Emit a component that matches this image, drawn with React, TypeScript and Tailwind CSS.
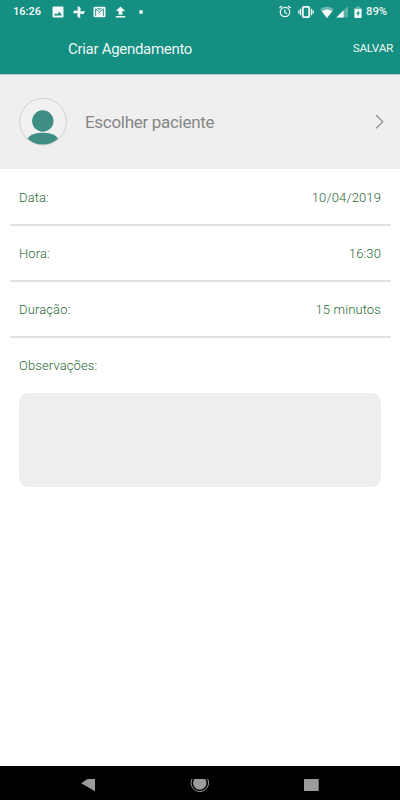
import React from 'react'

interface Campo {
  label: string
  valor: string
}

const campos: Campo[] = [
  { label: 'Data:', valor: '10/04/2019' },
  { label: 'Hora:', valor: '16:30' },
  { label: 'Duração:', valor: '15 minutos' },
]

/* ------------------------- BARRA DE STATUS ------------------------- */
const BarraStatus = () => (
  <div className="flex h-6 items-center text-[11px] font-medium text-white/95">
    <span className="ml-[13px] w-[39px] text-[11px] font-semibold">16:26</span>
    <svg className="h-[13px] w-[12px]" viewBox="0 0 12 13" fill="currentColor">
      <path fillRule="evenodd" d="M1.500.5h9a1 1 0 0 1 1 1v9a1 1 0 0 1-1 1h-9a1 1 0 0 1-1-1v-9a1 1 0 0 1 1-1zM2 9.500h8L7.300 5.800 5.200 8.400 3.800 6.900z" />
    </svg>
    <svg className="ml-[9px] h-[13px] w-[12px]" viewBox="0 0 12 13" fill="currentColor">
      <path d="M4.700 5.300V.3Q8 .7 7.700 3.900L6.900 5.200h5Q11.500 8.400 8.300 8.100L7.200 7.300v4.900Q3.900 11.800 4.200 8.600L5 7.300H.1Q.5 4.100 3.700 4.400z" />
    </svg>
    <svg className="ml-[8px] h-[13px] w-[13px]" viewBox="0 0 13 13">
      <rect x="0.500" y="0.700" width="12" height="10.500" rx="1.200" fill="currentColor" />
      <path d="M2.600 9.900V3l3.900 3.100L10.400 3v6.900" fill="none" stroke="#148f82" strokeWidth="0.900" />
      <path d="M3.300 1.900h6.400L6.500 4.300z" fill="#148f82" fillOpacity="0.600" />
    </svg>
    <svg className="ml-[9px] h-[13px] w-[11px]" viewBox="0 0 11 13" fill="currentColor">
      <path d="M5.500.5.900 5h2.700v3.800h3.800V5h2.700zM.8 9.900h9.400v1.600H.8z" />
    </svg>
    <span className="mb-px ml-[13px] h-1 w-1 rounded-full bg-white/95" />
    <svg className="ml-auto h-[14px] w-[13px]" viewBox="0 0 13 14" fill="none" stroke="currentColor">
      <circle cx="6" cy="7" r="4.700" strokeWidth="1.300" />
      <path d="M.4 3.100 3.100.9M11.600 3.100 8.900.9" strokeWidth="1.300" />
      <path d="M5.800 4.300v3.100l2.300 1.400" strokeWidth="1.100" />
    </svg>
    <svg className="ml-[6px] h-[13px] w-[16px]" viewBox="0 0 16 13" fill="none" stroke="currentColor">
      <rect x="4.900" y="0.900" width="6.200" height="10.200" rx="0.800" strokeWidth="1.700" />
      <path d="M2.600 2.800v6.400M13.400 2.800v6.400M.9 4.200v3.600M15.100 4.200v3.600" strokeWidth="1.300" />
    </svg>
    <svg className="ml-[6px] h-[13px] w-[14px]" viewBox="0 0 14 13" fill="currentColor">
      <path opacity="0.400" d="M7 11.900.1 3.200Q7-1.500 13.900 3.200z" />
      <path d="M7 11.900 1.700 5.200Q7 2 12.300 5.200z" />
    </svg>
    <svg className="ml-[2px] h-[12px] w-[12px]" viewBox="0 0 12 12" fill="currentColor">
      <path opacity="0.300" d="M12 0v11.500H.3z" />
      <path d="M7.600 4.300v7.200H.3z" />
    </svg>
    <svg className="ml-[6px] h-[13px] w-[8px]" viewBox="0 0 8 13" fill="currentColor">
      <path opacity="0.400" d="M2.500.5h3v1.200h1.200q.9 0 .9.900V4H.4V2.600q0-.9.900-.9h1.200z" />
      <path fillRule="evenodd" d="M.4 3.300h7.200v7.900q0 .9-.9.900H1.300q-.9 0-.9-.9zM4.500 4.300 2.300 7.900h1.300v2.700l2.300-4H4.500z" />
    </svg>
    <span className="ml-[4px] w-[34px] text-[11.300px]">89%</span>
  </div>
)

/* --------------------------- CABEÇALHO --------------------------- */
const Cabecalho = () => (
  <header className="relative z-10 h-[74px] shrink-0 bg-[#148f82] text-white shadow-[0_1px_1px_rgba(0,0,0,0.15)]">
    <BarraStatus />
    <div className="flex h-[50px] items-center justify-between pr-[7px] pl-[68px]">
      <h1 className="text-[15px] tracking-[-0.300px] text-white/95">Criar Agendamento</h1>
      <button className="text-[11.800px] tracking-[-0.300px] text-white/95">SALVAR</button>
    </div>
  </header>
)

const Avatar = () => (
  <svg className="h-12 w-12" viewBox="0 0 48 48">
    <circle cx="24" cy="23.700" r="23.300" fill="#f1f1f1" stroke="#c6c6c6" strokeWidth="0.800" />
    <circle cx="23.800" cy="23" r="10.700" fill="#3f8e84" />
    <path d="M8.500 40.500Q12 34.700 23.800 34.700t15.300 5.800Q33 46.500 23.800 46.500T8.500 40.500z" fill="#3f8e84" />
  </svg>
)

/* ----------------------- NAVEGAÇÃO ANDROID ----------------------- */
const BarraNavegacao = () => (
  <nav className="flex h-[34px] items-center bg-black pt-1 pl-[81px] text-[#9b9b9b]">
    <svg className="h-[14px] w-[14px]" viewBox="0 0 14 14" fill="currentColor">
      <path d="M14 1v12.300L.2 5.300 6.500 1z" />
    </svg>
    <svg className="ml-[95px] h-[14px] w-[20px]" viewBox="0 0 20 14">
      <path d="M4.400 1h10.800A6.700 6.700 0 1 1 4.400 1z" fill="currentColor" />
      <path d="M2 1A8.700 8.700 0 1 0 17.600 1" fill="none" stroke="currentColor" />
    </svg>
    <svg className="ml-[94px] h-[14px] w-[15px]" viewBox="0 0 15 14" fill="currentColor">
      <rect x="0" y="1" width="14.700" height="12" rx="0.500" />
    </svg>
  </nav>
)

export default function App() {
  return (
    <main className="flex h-[800px] w-[400px] flex-col overflow-hidden bg-white font-['Roboto',sans-serif]">
      <Cabecalho />

      {/* Paciente */}
      <button className="flex h-[95px] shrink-0 items-center bg-[#efefef] pr-4 pl-[18.500px] text-left">
        <Avatar />
        <span className="ml-[18.500px] pt-[3px] text-[17px] tracking-[-0.300px] text-[#868686]">
          Escolher paciente
        </span>
        <svg className="ml-auto h-4 w-[9px]" viewBox="0 0 9 16" fill="none" stroke="#8c8c8c" strokeWidth="1.200">
          <path d="M1 1 7.800 7.700 1 14.400" />
        </svg>
      </button>

      {/* Dados do agendamento */}
      <ul className="px-[9.500px] pt-px text-[13px] font-light tracking-[0.120px] text-[#1f6a35]">
        {campos.map(c => (
          <li
            key={c.label}
            className="flex h-14 items-center justify-between border-b-2 border-[#e2e2e2] px-[9.500px] pt-px"
          >
            <span>{c.label}</span>
            <span>{c.valor}</span>
          </li>
        ))}
      </ul>

      <section className="flex flex-1 flex-col px-[19px]">
        <label className="flex h-[55px] items-center text-[13px] font-light tracking-[0.120px] text-[#1f6a35]">
          Observações:
        </label>
        <textarea className="h-[94px] resize-none rounded-[9px] bg-[#eeeeee] outline-none" />
      </section>

      <BarraNavegacao />
    </main>
  )
}
